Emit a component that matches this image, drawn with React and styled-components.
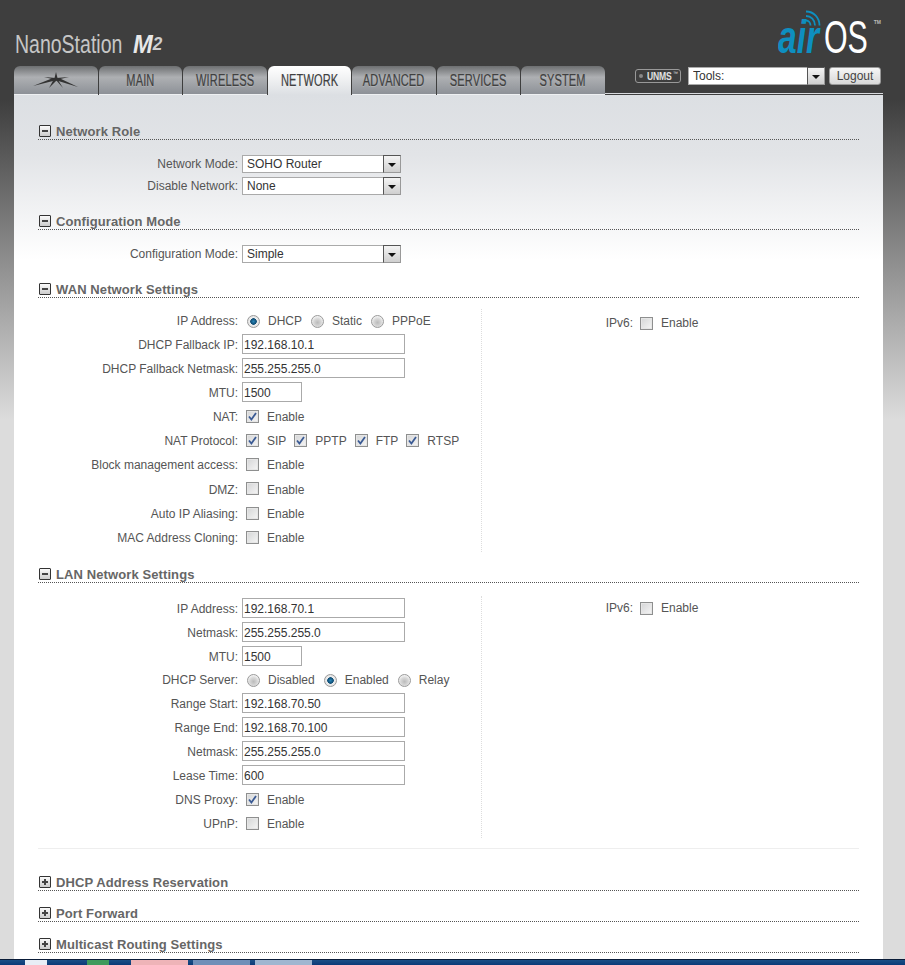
import React from 'react'
import styled, { createGlobalStyle } from 'styled-components'

const GlobalStyle = createGlobalStyle`
html, body {
  margin: 0;
  padding: 0;
  height: 965px;
  overflow: hidden;
  background: #dcdcdc;
  font-family: "Liberation Sans", Arial, sans-serif;
}
`

const wanLeft = [
  { label: 'DHCP Fallback IP:', value: '192.168.10.1' },
  { label: 'DHCP Fallback Netmask:', value: '255.255.255.0' },
]

const Radio = ({ on, children }) => (
  <Choice>
    <RadioDot $on={on} />
    <span>{children}</span>
  </Choice>
)

const Check = ({ on, flat, children }) => (
  <Choice>
    <CheckBox>
      {on && (
        <svg width="9" height="9" viewBox="0 0 9 9">
          <path d="M1 4.5 L3.4 7.5 L8 1" fill="none" stroke="#3a5a94" strokeWidth="1.8" />
        </svg>
      )}
    </CheckBox>
    <ChoiceText $flat={flat}>{children}</ChoiceText>
  </Choice>
)

const Dropdown = ({ value, wide }) => (
  <SelectWrap $wide={wide}>
    <SelectField defaultValue={value}>
      <option>{value}</option>
    </SelectField>
    <SelectArrow />
  </SelectWrap>
)

const Heading = ({ plus, children }) => (
  <SectionHead>
    <Toggle $plus={plus} />
    <SectionTitle>{children}</SectionTitle>
  </SectionHead>
)

const Row = ({ label, h, tight, flat, children }) => (
  <FormRow $h={h}>
    <Label $flat={flat}>{label}</Label>
    <Controls $tight={tight}>{children}</Controls>
  </FormRow>
)

const Ipv6 = ({ drop }) => (
  <SideRow $drop={drop}>
    <SideLabel>IPv6:</SideLabel>
    <Check flat>Enable</Check>
  </SideRow>
)

const TabItem = ({ active, children }) => (
  <Tab $active={active}>
    <TabLabel>{children}</TabLabel>
  </Tab>
)

const App = () => {
  return (
    <Page>
      <GlobalStyle />
      <TopBar>
        <Product>
          <ProductName>NanoStation</ProductName>
          <ProductModel>M<small>2</small></ProductModel>
        </Product>
        <AirOs>
          <svg width="16" height="16" viewBox="0 0 16 16">
            <g fill="none" stroke="#0e8fc0" strokeWidth="1.8">
              <path d="M1 1.5 C9 1.5 14.5 8 14.5 15.5" />
              <path d="M1 6 C6 6 10 10 10 15.5" />
              <path d="M1 10.5 C3.5 10.5 5.5 12.5 5.5 15.5" />
            </g>
          </svg>
          <Air>air</Air>
          <Os>OS</Os>
          <Tm>TM</Tm>
        </AirOs>
      </TopBar>

      <TabStrip>
        <Tabs>
          <Tab>
            <svg width="46" height="18" viewBox="0 0 46 18">
              <g fill="#333">
                <path d="M0 14 L20 6 L24 8 Z" />
                <path d="M45 15 L26 6 L22 8 Z" />
                <path d="M11 5 L23 6 L23 8 Z" />
                <path d="M36 5 L23 6 L23 8 Z" />
                <path d="M23 0 L25 8 L21 8 Z" />
                <path d="M16 16 L21 7 L24 8 Z" />
                <path d="M30 16 L22 7 L25 8 Z" />
              </g>
            </svg>
          </Tab>
          <TabItem>MAIN</TabItem>
          <TabItem>WIRELESS</TabItem>
          <TabItem active>NETWORK</TabItem>
          <TabItem>ADVANCED</TabItem>
          <TabItem>SERVICES</TabItem>
          <TabItem>SYSTEM</TabItem>
        </Tabs>
        <Tools>
          <Unms><i /><b>UNMS</b><sup>™</sup></Unms>
          <Dropdown value="Tools:" wide={137} />
          <Logout>Logout</Logout>
        </Tools>
      </TabStrip>

      <Panel>
        <Heading>Network Role</Heading>
        <SimpleRows>
          <Row label="Network Mode:" h={22} flat><Dropdown value="SOHO Router" /></Row>
          <Row label="Disable Network:" h={22} flat><Dropdown value="None" /></Row>
        </SimpleRows>

        <Heading>Configuration Mode</Heading>
        <SimpleRows>
          <Row label="Configuration Mode:" h={22} flat><Dropdown value="Simple" /></Row>
        </SimpleRows>

        <Heading>WAN Network Settings</Heading>
        <Columns>
          <LeftColumn>
            <Row label="IP Address:" h={23} flat>
              <Radio on>DHCP</Radio>
              <Radio>Static</Radio>
              <Radio>PPPoE</Radio>
            </Row>
            {wanLeft.map((r) => (
              <Row key={r.label} label={r.label}><TextInput defaultValue={r.value} /></Row>
            ))}
            <Row label="MTU:"><TextInput $short defaultValue="1500" /></Row>
            <Row label="NAT:"><Check on>Enable</Check></Row>
            <Row label="NAT Protocol:" tight>
              <Check on>SIP</Check>
              <Check on>PPTP</Check>
              <Check on>FTP</Check>
              <Check on>RTSP</Check>
            </Row>
            <Row label="Block management access:"><Check>Enable</Check></Row>
            <Row label="DMZ:" h={25}><Check>Enable</Check></Row>
            <Row label="Auto IP Aliasing:"><Check>Enable</Check></Row>
            <Row label="MAC Address Cloning:"><Check>Enable</Check></Row>
          </LeftColumn>
          <Ipv6 drop />
        </Columns>

        <Heading>LAN Network Settings</Heading>
        <Columns $lan>
          <LeftColumn>
            <Row label="IP Address:"><TextInput defaultValue="192.168.70.1" /></Row>
            <Row label="Netmask:"><TextInput defaultValue="255.255.255.0" /></Row>
            <Row label="MTU:"><TextInput $short defaultValue="1500" /></Row>
            <Row label="DHCP Server:" h={23} flat>
              <Radio>Disabled</Radio>
              <Radio on>Enabled</Radio>
              <Radio>Relay</Radio>
            </Row>
            <Row label="Range Start:"><TextInput defaultValue="192.168.70.50" /></Row>
            <Row label="Range End:"><TextInput defaultValue="192.168.70.100" /></Row>
            <Row label="Netmask:"><TextInput defaultValue="255.255.255.0" /></Row>
            <Row label="Lease Time:"><TextInput defaultValue="600" /></Row>
            <Row label="DNS Proxy:"><Check on>Enable</Check></Row>
            <Row label="UPnP:"><Check>Enable</Check></Row>
          </LeftColumn>
          <Ipv6 />
        </Columns>

        <Rule />
        <Collapsed>
          <Heading plus>DHCP Address Reservation</Heading>
          <Heading plus>Port Forward</Heading>
          <Heading plus>Multicast Routing Settings</Heading>
        </Collapsed>
      </Panel>

      <Taskbar>
        <StartArea>
          <TrayIcon $c="#e8eef6" />
          <TrayIcon $c="#3f9a5c" />
        </StartArea>
        <TaskButton $c="#eeb4b8" />
        <TaskButton $c="#6f8fb8" />
        <TaskButton $c="#9fb6d0" />
      </Taskbar>
    </Page>
  )
}

export default App

const Page = styled.div`
width: 905px;
height: 965px;
display: flex;
flex-direction: column;
overflow: hidden;
background: linear-gradient(180deg, #3e3e3e 0, #3e3e3e 100px, #dcdcdc 420px);
`
const TopBar = styled.div`
height: 66px;
flex: none;
display: flex;
justify-content: space-between;
align-items: flex-end;
padding: 0 35px 0 15px;
`
const Product = styled.div`
display: flex;
align-items: baseline;
padding-bottom: 12px;
`
const ProductName = styled.span`
display: inline-block;
width: 118px;
font-size: 25px;
line-height: 20px;
white-space: nowrap;
color: #c6c6c6;
transform: scaleX(0.78);
transform-origin: left center;
`
const ProductModel = styled.span`
display: inline-block;
font-weight: bold;
font-style: italic;
font-size: 25px;
line-height: 20px;
color: #e8e8e8;
transform: scaleX(0.95);
transform-origin: left center;

small {
  font-size: 18px;
  color: #cfcfcf;
  vertical-align: 3px;
}
`
const AirOs = styled.div`
position: relative;
display: flex;
align-items: flex-end;
height: 56px;
padding-bottom: 13px;
box-sizing: border-box;

svg {
  position: absolute;
  left: 27px;
  top: 0px;
}
`
const Air = styled.span`
display: inline-block;
width: 46px;
font-weight: bold;
font-style: italic;
font-size: 46px;
line-height: 32px;
color: #0e8fc0;
white-space: nowrap;
transform: scaleX(0.73);
transform-origin: left bottom;
`
const Os = styled.span`
display: inline-block;
width: 46px;
font-size: 46px;
line-height: 32px;
color: #fff;
white-space: nowrap;
transform: scaleX(0.66);
transform-origin: left bottom;
`
const Tm = styled.span`
font-size: 5px;
font-weight: bold;
color: #bbb;
position: absolute;
right: -11px;
top: 9px;
`
const TabStrip = styled.div`
flex: none;
height: 29px;
margin: 0 22px 0 14px;
display: flex;
justify-content: space-between;
`
const Tabs = styled.div`
display: flex;
gap: 1px;
`
const Tab = styled.div`
width: 83.5px;
height: 29px;
flex: none;
display: flex;
align-items: center;
justify-content: center;
border-radius: 6px 6px 0 0;
box-sizing: border-box;
padding-top: 1px;
border-bottom: ${(p) => (p.$active ? 'none' : '1px solid #eef0f2')};
background: ${(p) =>
    p.$active
      ? 'linear-gradient(180deg, #ffffff 0, #f2f3f4 40%, #dcdfe3 100%)'
      : 'linear-gradient(180deg, #6d6f71 0, #aeb0b3 40%, #8d9197 100%)'};
`
const TabLabel = styled.span`
display: inline-block;
font-size: 16px;
white-space: nowrap;
letter-spacing: 0.2px;
color: #404040;
-webkit-text-stroke: 0.2px #404040;
text-shadow: 0 1px 0 rgba(255, 255, 255, 0.2);
transform: scaleX(0.69);
`
const Tools = styled.div`
flex: 1;
display: flex;
justify-content: flex-end;
align-items: flex-start;
gap: 4px;
height: 28px;
box-sizing: border-box;
border-bottom: 1px solid #d8dade;
padding: 1px 2px 0 0;
`
const Unms = styled.div`
width: 46px;
height: 14px;
box-sizing: border-box;
margin: 2px 3px 0 0;
border: 1px solid #999;
border-radius: 3px;
display: flex;
align-items: center;
padding-left: 3px;
color: #e2e2e2;

i {
  width: 4px;
  height: 4px;
  flex: none;
  margin-right: 4px;
  border-radius: 50%;
  background: #888;
}

b {
  width: 27px;
  font-size: 11px;
  letter-spacing: -0.2px;
  transform: scaleX(0.78);
  transform-origin: left center;
}

sup {
  font-size: 5px;
  line-height: 5px;
  margin: -6px 0 0 -1px;
}
`
const Logout = styled.button`
width: 52px;
height: 18px;
margin: 0;
padding: 0;
border: 1px solid #999;
border-radius: 3px;
background: linear-gradient(180deg, #f6f6f6, #d8d8d8);
font-family: "Liberation Sans", sans-serif;
font-size: 12px;
color: #444;
`
const Panel = styled.div`
flex: 1;
min-height: 0;
margin: 0 22px 0 14px;
padding: 25px 24px 0;
background: linear-gradient(180deg, #dcdfe3 0, #e2e4e7 60px, #ffffff 165px);
`
const SectionHead = styled.div`
height: 20px;
box-sizing: border-box;
display: flex;
align-items: flex-end;
gap: 5px;
padding-left: 1px;
border-bottom: 1px dotted #555;
`
const Toggle = styled.span`
width: 12px;
height: 12px;
box-sizing: border-box;
margin-bottom: 2px;
border: 1px solid #333;
border-radius: 1px;
background: linear-gradient(180deg, #fafafa, #cccccc);
display: flex;
align-items: center;
justify-content: center;
position: relative;

&::before {
  content: "";
  width: 6px;
  height: 2px;
  background: #444;
}

&::after {
  content: "";
  display: ${(p) => (p.$plus ? 'block' : 'none')};
  position: absolute;
  left: 4px;
  top: 2px;
  width: 2px;
  height: 6px;
  background: #444;
}
`
const SectionTitle = styled.span`
font-size: 13px;
line-height: 15px;
font-weight: bold;
letter-spacing: 0.1px;
color: #666;
`
const SimpleRows = styled.div`
padding: 13px 0;
`
const FormRow = styled.div`
height: ${(p) => p.$h || 24}px;
display: flex;
align-items: center;
gap: 4px;
`
const Label = styled.span`
width: 200px;
flex: none;
box-sizing: border-box;
padding-top: ${(p) => (p.$flat ? 0 : 2)}px;
text-align: right;
font-size: 12px;
color: #555;
`
const Controls = styled.div`
display: flex;
align-items: center;
gap: ${(p) => (p.$tight ? 8 : 9)}px;
`
const SelectWrap = styled.div`
position: relative;
width: ${(p) => p.$wide || 159}px;
height: 18px;
`
const SelectField = styled.select`
appearance: none;
display: block;
width: 100%;
height: 100%;
box-sizing: border-box;
margin: 0;
padding: 0 0 0 4px;
border: 1px solid #aaa;
border-radius: 0;
background: #fff;
font-family: "Liberation Sans", sans-serif;
font-size: 12px;
color: #333;
`
const SelectArrow = styled.span`
position: absolute;
top: 0;
right: 0;
width: 18px;
height: 18px;
box-sizing: border-box;
border: 1px solid;
border-color: #555 #999 #999 #555;
background: linear-gradient(180deg, #f4f4f4, #cfcfcf);

&::after {
  content: "";
  position: absolute;
  left: 4px;
  top: 7px;
  border-style: solid;
  border-width: 4px 4px 0;
  border-color: #111 transparent transparent;
}
`
const TextInput = styled.input.attrs({ type: 'text' })`
display: block;
width: ${(p) => (p.$short ? '60px' : '163px')};
height: 20px;
box-sizing: border-box;
margin: 0;
padding: 2px 0 0 1px;
border: 1px solid #aaa;
border-radius: 0;
background: #fff;
font-family: "Liberation Sans", sans-serif;
font-size: 12px;
color: #333;
`
const Choice = styled.label`
display: flex;
align-items: center;
gap: 8px;
font-size: 12px;
color: #555;
`
const ChoiceText = styled.span`
padding-top: ${(p) => (p.$flat ? 0 : 2)}px;
`
const CheckBox = styled.span`
width: 13px;
height: 13px;
box-sizing: border-box;
margin-left: 4px;
border: 1px solid #8e8f8f;
box-shadow: inset 0 0 0 1px #e6e6e6;
background: linear-gradient(135deg, #d4d5d6, #f6f6f6);
display: flex;
align-items: center;
justify-content: center;

${Choice} + ${Choice} & {
  margin-left: 0;
}
`
const RadioDot = styled.span`
width: 13px;
height: 13px;
box-sizing: border-box;
margin: 2px 0 0 5px;
border-radius: 50%;
border: 1px solid #9a9a9a;
background: ${(p) =>
    p.$on
      ? 'radial-gradient(circle at 50% 50%, #2a86b8 0, #0d4a72 38%, #ededed 46%, #dcdcdc 100%)'
      : 'radial-gradient(circle at 50% 60%, #bbbbbb 0, #d8d8d8 45%, #f2f2f2 72%)'};

${Choice} + ${Choice} & {
  margin-left: 0;
}
`
const Columns = styled.div`
display: flex;
padding-top: ${(p) => (p.$lan ? 13 : 11)}px;
margin-bottom: ${(p) => (p.$lan ? 10 : 11)}px;
`
const LeftColumn = styled.div`
width: 444px;
flex: none;
box-sizing: border-box;
padding-bottom: 3px;
border-right: 1px dotted #ddd;
`
const SideRow = styled.div`
height: 24px;
margin-top: ${(p) => (p.$drop ? 2 : 0)}px;
display: flex;
align-items: center;
gap: 3px;
`
const SideLabel = styled.span`
width: 151px;
text-align: right;
font-size: 12px;
color: #555;
`
const Rule = styled.div`
height: 1px;
background: #eeeeee;
`
const Collapsed = styled.div`
margin-top: 22px;
display: flex;
flex-direction: column;
gap: 11px;
`
const Taskbar = styled.div`
flex: none;
height: 6px;
box-sizing: border-box;
display: flex;
gap: 5px;
border-top: 1px solid #0a1c38;
background: linear-gradient(180deg, #1a4f86, #0a3a78);
`
const StartArea = styled.div`
width: 126px;
display: flex;
gap: 40px;
padding-left: 25px;
box-sizing: border-box;
`
const TrayIcon = styled.span`
width: 22px;
background: ${(p) => p.$c};
`
const TaskButton = styled.span`
width: 57px;
background: ${(p) => p.$c};
`
